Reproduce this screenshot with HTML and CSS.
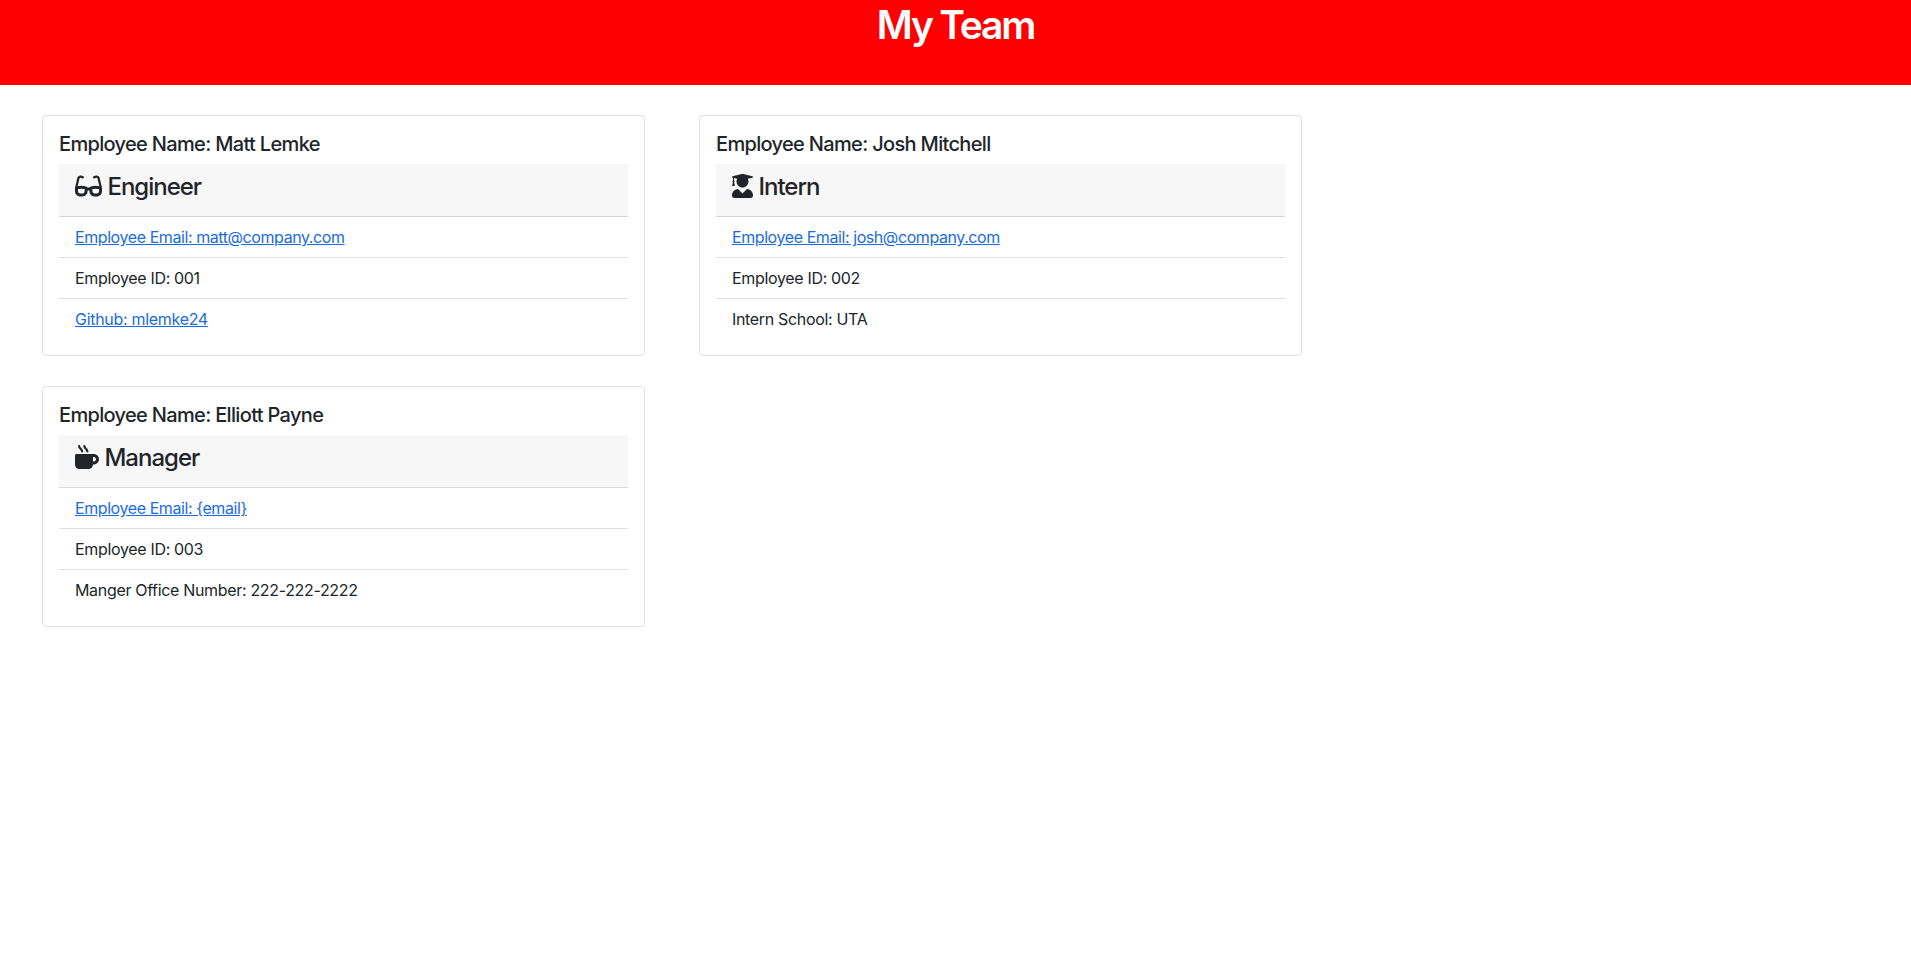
FILE: index.html
```html
<!DOCTYPE html>
<html lang="en">
<head>
<meta charset="utf-8">
<title>My Team</title>
<link rel="stylesheet" href="styles.css">
</head>
<body>
<header class="banner"><h1 class="banner-title">My Team</h1></header>
<main class="team">
  <section class="card">
    <h5 class="name">Employee Name: Matt Lemke</h5>
    <div class="role"><h4 class="role-title"><svg class="icon icon-glasses" viewBox="0 0 576 512"><path d="M118.6 80c-11.5 0-21.4 7.9-24 19.1L57 260.3c20.5-6.2 48.3-12.3 78.7-12.3c32.3 0 61.8 6.9 82.8 13.5c10.6 3.3 19.3 6.7 25.4 9.2c3.1 1.3 5.5 2.4 7.3 3.2l3 1.4c5.8 2.9 10.4 7.3 13.5 12.7h40.6c3.1-5.3 7.7-9.8 13.5-12.7l3-1.4c1.8-.8 4.2-1.9 7.3-3.2c6.1-2.6 14.8-5.9 25.4-9.2c21-6.6 50.4-13.5 82.8-13.5c30.4 0 58.2 6.1 78.7 12.3L481.4 99.1c-2.6-11.2-12.6-19.1-24-19.1c-3.1 0-6.2.6-9.2 1.8L416.9 94.3c-12.3 4.9-26.3-1.1-31.2-13.4s1.1-26.3 13.4-31.2l31.3-12.5c8.6-3.4 17.7-5.2 27-5.2c33.8 0 63.1 23.3 70.8 56.2l43.9 188c1.7 7.3 2.9 14.7 3.5 22.1c.3 1.9.5 3.8.5 5.7V368c0 61.9-50.1 112-112 112H419.7c-59.4 0-108.5-46.4-111.8-105.800L306.600 352H269.400l-1.200 22.200C264.900 433.600 215.800 480 156.300 480H112C50.100 480 0 429.900 0 368V304c0-1.900.2-3.800.5-5.700c.6-7.400 1.800-14.800 3.500-22.100l43.900-188C55.500 55.300 84.800 32 118.600 32c9.200 0 18.400 1.800 27 5.200l31.300 12.500c12.300 4.900 18.300 18.900 13.400 31.200s-18.900 18.300-31.200 13.400L127.800 81.800c-2.900-1.200-6-1.800-9.200-1.800zM64 325.400V368c0 26.500 21.500 48 48 48h44.300c25.500 0 46.500-19.900 47.900-45.300l2.500-45.600c-2.300-.8-4.900-1.700-7.500-2.500c-17.200-5.400-39.900-10.500-63.600-10.500c-23.700 0-46.200 5.100-63.200 10.500c-3.100 1-5.900 1.900-8.500 2.900zM512 368V325.400c-2.600-.9-5.500-1.900-8.500-2.900c-17-5.400-39.500-10.500-63.200-10.500c-23.700 0-46.400 5.100-63.600 10.500c-2.700.8-5.200 1.700-7.500 2.500l2.500 45.600c1.400 25.400 22.500 45.300 47.900 45.300H464c26.500 0 48-21.500 48-48z"/></svg> <span class="engineer">Engineer</span></h4></div>
    <ul class="details">
      <li class="detail"><a class="link mail" href="#">Employee Email: matt@company.com</a></li>
      <li class="detail">Employee ID: 001</li>
      <li class="detail"><a class="link" href="#">Github: mlemke24</a></li>
    </ul>
  </section>
  <section class="card">
    <h5 class="name">Employee Name: Josh Mitchell</h5>
    <div class="role"><h4 class="role-title"><svg class="icon icon-graduate" viewBox="0 0 448 512"><path d="M319.4 320.6L224 416l-95.4-95.4C57.1 323.7 0 382.2 0 454.4v9.6c0 26.500 21.500 48 48 48h352c26.500 0 48-21.500 48-48v-9.600c0-72.200-57.100-130.700-128.600-133.800zM13.600 79.800l6.400 1.500v58.400c-7 4.200-12 11.500-12 20.300 0 8.400 4.600 15.400 11.100 19.700L3.500 242c-1.700 6.900 2.100 14 7.600 14h41.800c5.500 0 9.300-7.100 7.600-14l-15.600-62.300C51.400 175.400 56 168.400 56 160c0-8.800-5-16.100-12-20.300V87.100l66 15.900c-8.600 17.200-14 36.400-14 57 0 70.700 57.300 128 128 128s128-57.300 128-128c0-20.600-5.300-39.800-14-57l96.300-23.200c18.200-4.400 18.200-27.100 0-31.500l-190.400-46c-13-3.100-26.700-3.100-39.700 0L13.600 48.200c-18.100 4.400-18.100 27.200 0 31.600z"/></svg> <span class="intern">Intern</span></h4></div>
    <ul class="details">
      <li class="detail"><a class="link mail" href="#">Employee Email: josh@company.com</a></li>
      <li class="detail">Employee ID: 002</li>
      <li class="detail">Intern School: UTA</li>
    </ul>
  </section>
  <section class="card">
    <h5 class="name">Employee Name: Elliott Payne</h5>
    <div class="role"><h4 class="role-title"><svg class="icon icon-mug" viewBox="0 0 512 512"><path d="M32 192c-17.700 0-32 14.300-32 32V416c0 53 43 96 96 96H288c53 0 96-43 96-96h16c61.900 0 112-50.100 112-112s-50.100-112-112-112H32zm352 64h16c26.500 0 48 21.500 48 48s-21.500 48-48 48H384z"/><path class="steam" d="M88 24c0 56 64 56 64 112M200 24c0 56 64 56 64 112"/></svg> <span class="manager">Manager</span></h4></div>
    <ul class="details">
      <li class="detail"><a class="link mail" href="#">Employee Email: {email}</a></li>
      <li class="detail">Employee ID: 003</li>
      <li class="detail">Manger Office Number: 222-222-2222</li>
    </ul>
  </section>
</main>
</body>
</html>
```

FILE: styles.css
```css
* { box-sizing: border-box; }
body {
  margin: 0;
  background: #fff;
  color: #212529;
  font: 16px/24px Inter, "Liberation Sans", sans-serif;
}
.banner { height: 85px; padding-top: 1px; background: #f00; text-align: center; }
.banner-title {
  margin: 0;
  color: #fff;
  font-size: 39px;
  font-weight: 600;
  line-height: 48px;
  letter-spacing: -2.2px;
}
.team {
  display: grid;
  grid-template-columns: 603px 603px;
  gap: 30px 54px;
  padding: 30px 42px;
}
.card {
  height: 241px;
  padding: 16px;
  border: 1px solid #dfdfdf;
  border-radius: 4px;
}
.name {
  margin: 0 0 8px;
  font-size: 20px;
  font-weight: 500;
  line-height: 24px;
  letter-spacing: -0.67px;
}
.role {
  height: 53px;
  padding: 9px 16px 8px;
  background: #f7f7f7;
  border-bottom: 1px solid #d8d8d8;
}
.role-title {
  margin: 0;
  font-size: 24px;
  font-weight: 500;
  line-height: 28.8px;
  letter-spacing: -1px;
}
.icon { height: 24px; vertical-align: -3px; fill: currentColor; overflow: visible; }
.icon-glasses { width: 27px; }
.icon-graduate { width: 21px; }
.icon-mug { width: 24px; }
.steam { fill: none; stroke: currentColor; stroke-width: 48; stroke-linecap: round; }
.details { margin: 0; padding: 0; list-style: none; }
.detail { height: 41px; padding: 8px 16px; border-bottom: 1px solid #dfdfdf; letter-spacing: -0.33px; }
.detail:last-child { border-bottom: 0; }
.link { color: #1b6ce0; text-decoration: underline; letter-spacing: -0.3px; }
.mail { letter-spacing: -0.42px; }
```
